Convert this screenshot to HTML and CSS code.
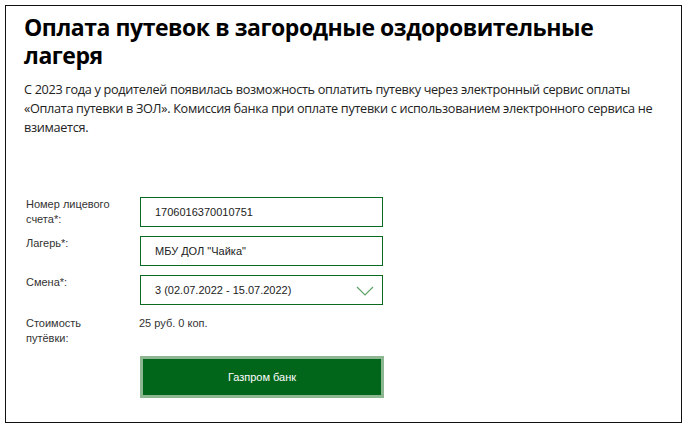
FILE: index.html
```html
<!DOCTYPE html>
<html lang="ru">
<head>
<meta charset="utf-8">
<link rel="stylesheet" href="styles.css">
</head>
<body>
<div class="frame">
  <h1 class="title">Оплата путевок в загородные оздоровительные лагеря</h1>
  <p class="intro">С 2023 года у родителей появилась возможность оплатить путевку через электронный сервис оплаты «Оплата путевки в ЗОЛ». Комиссия банка при оплате путевки с использованием электронного сервиса не взимается.</p>
  <div class="form">
    <div class="label">Номер лицевого счета*:</div>
    <div class="field">1706016370010751</div>
    <div class="label">Лагерь*:</div>
    <div class="field">МБУ ДОЛ "Чайка"</div>
    <div class="label">Смена*:</div>
    <div class="field select">3 (02.07.2022 - 15.07.2022)
      <svg class="chev" width="18" height="10" viewBox="0 0 18 10"><path d="M1 1 L9 9 L17 1" fill="none" stroke="#5fa36a" stroke-width="1.2"/></svg>
    </div>
    <div class="label cost-label">Стоимость путёвки:</div>
    <div class="cost">25 руб. 0 коп.</div>
    <div></div>
    <div class="btn">Газпром банк</div>
  </div>
</div>
</body>
</html>
```

FILE: styles.css
```css
html, body { margin: 0; padding: 0; background: #fff; }
.frame {
  margin: 5px 0 0 5px;
  border: 1.5px solid #111;
  padding: 0 18px;
  box-sizing: border-box;
  width: 677px;
  height: 418px;
}
.title {
  font-family: "Open Sans", sans-serif;
  font-weight: 700;
  font-size: 23px;
  line-height: 28px;
  color: #000;
  margin: 7px 0 0 0;
  letter-spacing: -0.45px;
}
.intro {
  font-family: "Open Sans", sans-serif;
  font-size: 12.7px;
  line-height: 19px;
  color: #222;
  margin: 11px 0 0 0;
  letter-spacing: -0.32px;
}
.form {
  margin-top: 60px;
  display: grid;
  grid-template-columns: 114px 243px;
  row-gap: 9px;
  padding-left: 2px;
  font-family: "Liberation Sans", Arial, sans-serif;
  font-size: 11px;
  color: #333;
}
.label { line-height: 15px; padding-top: 0; padding-right: 24px; }
.field {
  height: 30px;
  border: 1px solid #0b6a1f;
  box-sizing: border-box;
  padding-left: 14px;
  display: flex;
  align-items: center;
  position: relative;
  color: #222;
}
.select .chev { position: absolute; right: 8px; top: 10px; }
.cost-label { padding-top: 2px; }
.cost { padding-top: 2px; margin-left: -1px; line-height: 15px; }
.btn {
  margin-top: 1px;
  width: 244px;
  height: 42px;
  box-sizing: border-box;
  border: 3px solid #8cb790;
  background: #02661a;
  color: #fff;
  display: flex;
  align-items: center;
  justify-content: center;
}
```
